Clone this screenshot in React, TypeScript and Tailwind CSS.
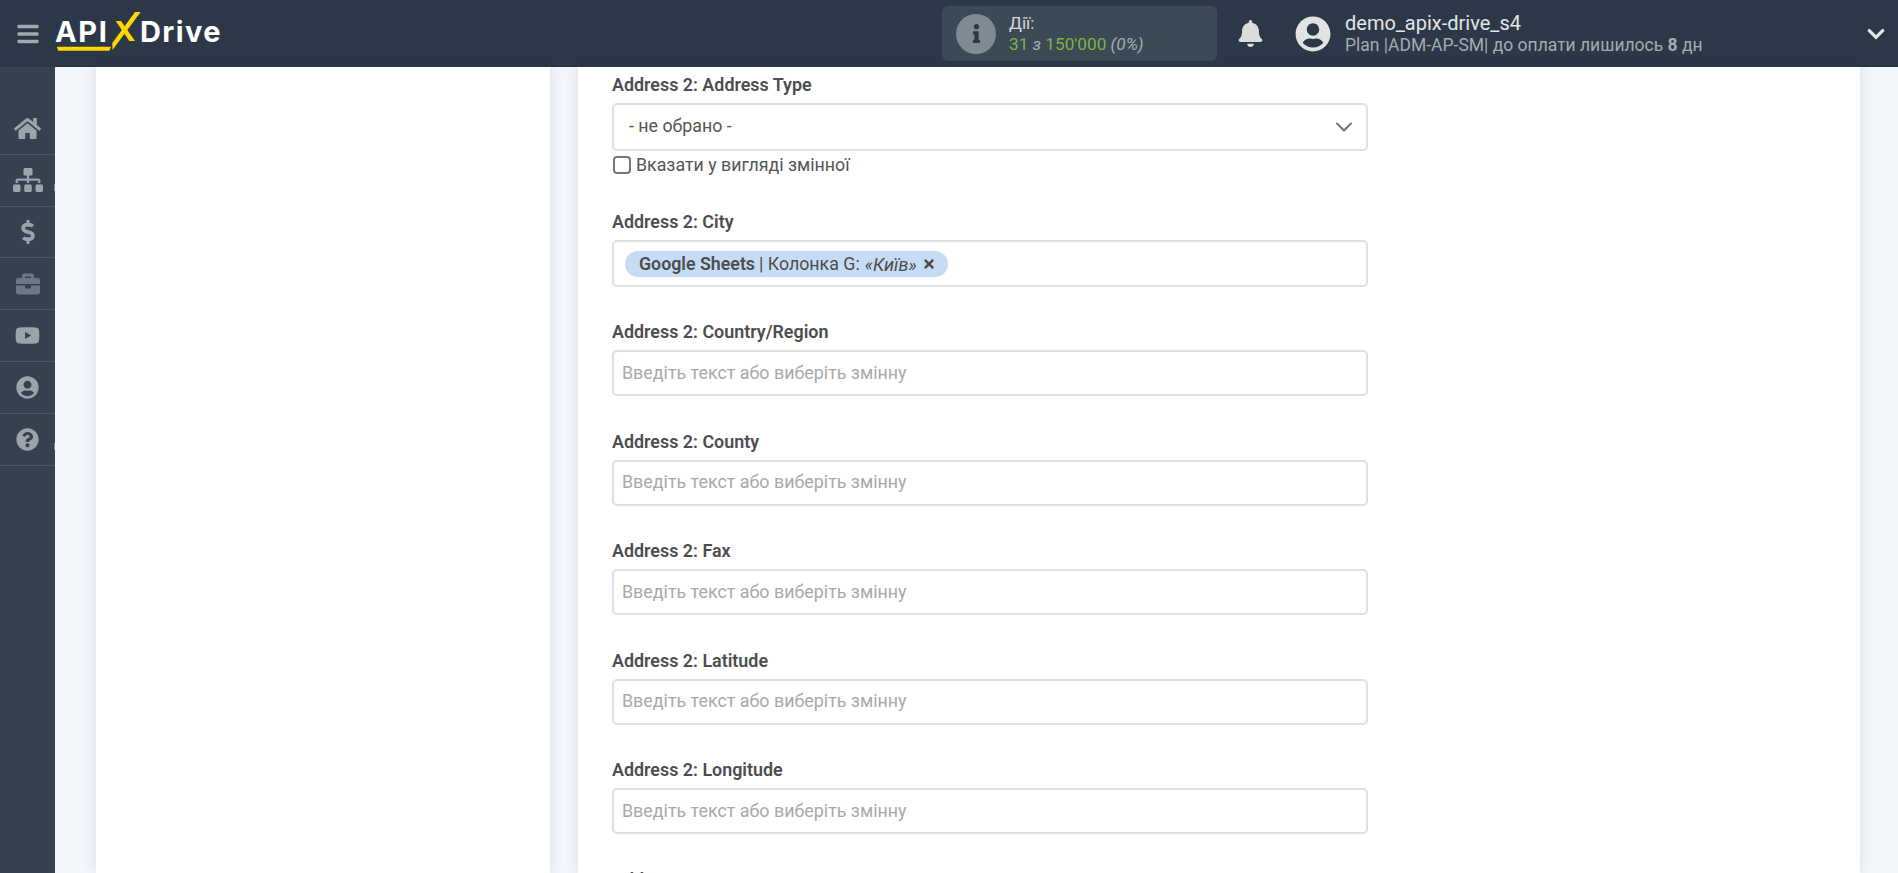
import { FaBars, FaBell, FaBriefcase, FaChevronDown, FaDollarSign, FaHome, FaInfo, FaQuestionCircle, FaSitemap, FaTimes, FaUserCircle, FaYoutube } from 'react-icons/fa';
import { ChevronDown } from 'lucide-react';

const navItems = [
  { icon: FaHome, size: 27, dim: false, mark: false },
  { icon: FaSitemap, size: 30, dim: false, mark: true },
  { icon: FaDollarSign, size: 24, dim: false, mark: false },
  { icon: FaBriefcase, size: 24, dim: true, mark: false },
  { icon: FaYoutube, size: 25, dim: false, mark: false },
  { icon: FaUserCircle, size: 23, dim: false, mark: false },
  { icon: FaQuestionCircle, size: 23, dim: false, mark: true },
];

const emptyFields = ['Country/Region', 'County', 'Fax', 'Latitude', 'Longitude'];

const Field = ({ label }: { label: string }) => (
  <div className="h-[109.5px]">
    <div className="h-[24px] text-[17.9px] leading-[24px] font-semibold text-[#4d4d4d]">Address 2: {label}</div>
    <div className="mt-[6px] flex h-[46px] items-center rounded-[5px] border-2 border-[#e0e0e0] bg-white px-[8px] text-[17.85px] text-[#a9a9a9]">
      Введіть текст або виберіть змінну
    </div>
  </div>
);

export default function App() {
  return (
    <div className="flex h-screen flex-col overflow-hidden bg-[#f3f6fb] font-['Roboto',sans-serif]">
      {/* Header */}
      <header className="flex h-[67px] shrink-0 items-center bg-[#2c3847]">
        <div className="flex w-[55px] justify-center pl-[1px]">
          <FaBars className="text-[#a3a8ae]" size={24} />
        </div>
        <div className="relative h-[67px] w-[172px] font-['Inter',sans-serif] text-[29px] font-bold text-white">
          <span className="absolute top-[13.5px] left-0 leading-[36px] tracking-[1.6px]">API</span>
          <span className="absolute top-[13.5px] left-[85px] leading-[36px] tracking-[1.4px]">Drive</span>
          <svg className="absolute inset-0" width="172" height="67" viewBox="0 0 172 67">
            <polygon points="80,12 85.7,12 57.5,50 57.3,43" fill="#ffd600" />
            <polygon points="60.7,21 66,21 80,41 74.3,41" fill="#ffd600" />
            <polygon points="1.7,46.7 56,46.7 54.3,50.7 3.3,50.7" fill="#ffd600" />
          </svg>
        </div>
        <div className="ml-[715px] flex h-[55px] w-[275px] items-center rounded-[6px] bg-[#3c4a55] pl-[14px]">
          <div className="flex h-[40px] w-[40px] items-center justify-center rounded-full bg-[#7f8a93]">
            <FaInfo className="text-[#2c3847]" size={19} />
          </div>
          <div className="ml-[13px] text-[17.2px] leading-[21px]">
            <div className="text-[#d5d8db]">Дії:</div>
            <div className="text-[#7cb342]">
              31 <i className="text-[#a3abb2]">з</i> 150'000 <i className="text-[#a3abb2]">(0%)</i>
            </div>
          </div>
        </div>
        <FaBell className="ml-[20px] text-[#dcdcdc]" size={27} />
        <FaUserCircle className="ml-[31px] text-[#e3e3e3]" size={36} />
        <div className="ml-[14px] w-[521px]">
          <div className="text-[20px] leading-[23px] text-[#e3e5e8]">demo_apix-drive_s4</div>
          <div className="text-[17.5px] leading-[21px] text-[#a3abb2]">
            Plan |ADM-AP-SM| до оплати лишилось <b>8</b> дн
          </div>
        </div>
        <FaChevronDown className="text-[#e3e3e3]" size={20} />
      </header>

      <div className="flex min-h-0 flex-1">
        {/* Sidebar */}
        <nav className="w-[55px] shrink-0 bg-[#364150]">
          <div className="h-[36px]" />
          {navItems.map(({ icon: Icon, size, dim, mark }, i) => (
            <div key={i} className="relative flex h-[51.8px] items-center justify-center border-b border-[#4a5563]">
              <Icon className={dim ? 'text-[#6e7884]' : 'text-[#9ca3ab]'} size={size} />
              {mark && <span className="absolute top-[29px] right-0 h-[7px] w-[1px] bg-[#808a96]" />}
            </div>
          ))}
        </nav>

        {/* Left panel */}
        <aside className="ml-[41px] w-[454px] shrink-0 bg-white shadow-[0_0_14px_rgba(40,50,70,0.12)]" />

        {/* Main form */}
        <main className="ml-[28px] w-[1282px] shrink-0 bg-white pl-[34px] shadow-[0_0_14px_rgba(40,50,70,0.12)]">
          <div className="w-[756px]">
            <div className="mt-[6px] h-[24px] text-[17.9px] leading-[24px] font-semibold text-[#4d4d4d]">Address 2: Address Type</div>
            <div className="mt-[6px] flex h-[48px] items-center justify-between rounded-[5px] border-2 border-[#e0e0e0] pr-[8px] pl-[15px] text-[17.8px] text-[#555]">
              <span className="pb-[1px]">- не обрано -</span>
              <ChevronDown className="text-[#6f6f6f]" size={28} strokeWidth={1.6} />
            </div>
            <div className="mt-[3px] flex h-[22px] items-center text-[17.8px] text-[#555]">
              <span className="ml-[1px] h-[18px] w-[18px] rounded-[4px] border-2 border-[#767676] bg-white" />
              <span className="ml-[5px]">Вказати у вигляді змінної</span>
            </div>
            <div className="mt-[34px] h-[24px] text-[17.9px] leading-[24px] font-semibold text-[#4d4d4d]">Address 2: City</div>
            <div className="mt-[6px] mb-[33px] flex h-[47px] items-center rounded-[5px] border-2 border-[#e0e0e0] pl-[11px]">
              <span className="flex h-[26px] items-center rounded-[13px] bg-[#c6dcf5] pt-[1px] pr-[12px] pl-[14px] text-[17.8px] text-[#4d4d4d]">
                <b className="font-semibold">Google Sheets</b>
                <span className="ml-[4px]">| Колонка G:</span>
                <i className="ml-[5px] text-[18px]">«Київ»</i>
                <FaTimes className="ml-[5px]" size={14} />
              </span>
            </div>
            {emptyFields.map((label) => (
              <Field key={label} label={label} />
            ))}
            <div className="h-[24px] text-[17.9px] leading-[24px] font-semibold text-[#4d4d4d]">Address 2: Name</div>
          </div>
        </main>
      </div>
    </div>
  );
}
